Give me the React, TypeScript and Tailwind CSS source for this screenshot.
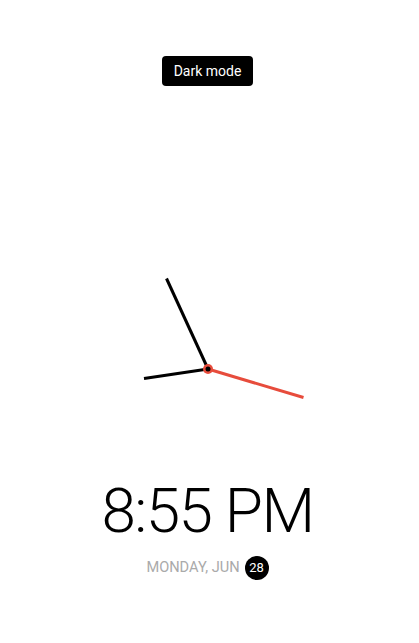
export default function App() {
  const red = '#e74c3c';
  return (
    <div className="flex min-h-screen flex-col items-center bg-white pr-1 font-['Roboto',sans-serif] text-black">
      <button
        type="button"
        className="mt-[56px] h-[30px] rounded-[4px] bg-black px-3 text-sm font-normal text-white"
      >
        Dark mode
      </button>

      {/* Clock face: hands only */}
      <svg className="mt-[183px]" width="200" height="200" viewBox="0 0 200 200">
        <line x1="100" y1="100" x2="36" y2="109.6" stroke="#000" strokeWidth="3" />
        <line x1="100" y1="100" x2="58.5" y2="9.5" stroke="#000" strokeWidth="3" />
        <line x1="100" y1="100" x2="195.5" y2="128.5" stroke={red} strokeWidth="3" />
        <circle cx="100" cy="100" r="5" fill={red} />
        <circle cx="100" cy="100" r="2.5" fill="#000" />
      </svg>

      <div className="mt-[11px] text-[62px] font-light leading-none tracking-[-1.6px]">8:55 PM</div>

      <div className="mt-[14px] flex h-6 items-center gap-[5px]">
        <span className="text-[14.6px] uppercase text-[#aaaaaa]">Monday, Jun</span>
        <span className="flex h-6 w-6 items-center justify-center rounded-full bg-black text-[13px] text-white">
          28
        </span>
      </div>
    </div>
  );
}
